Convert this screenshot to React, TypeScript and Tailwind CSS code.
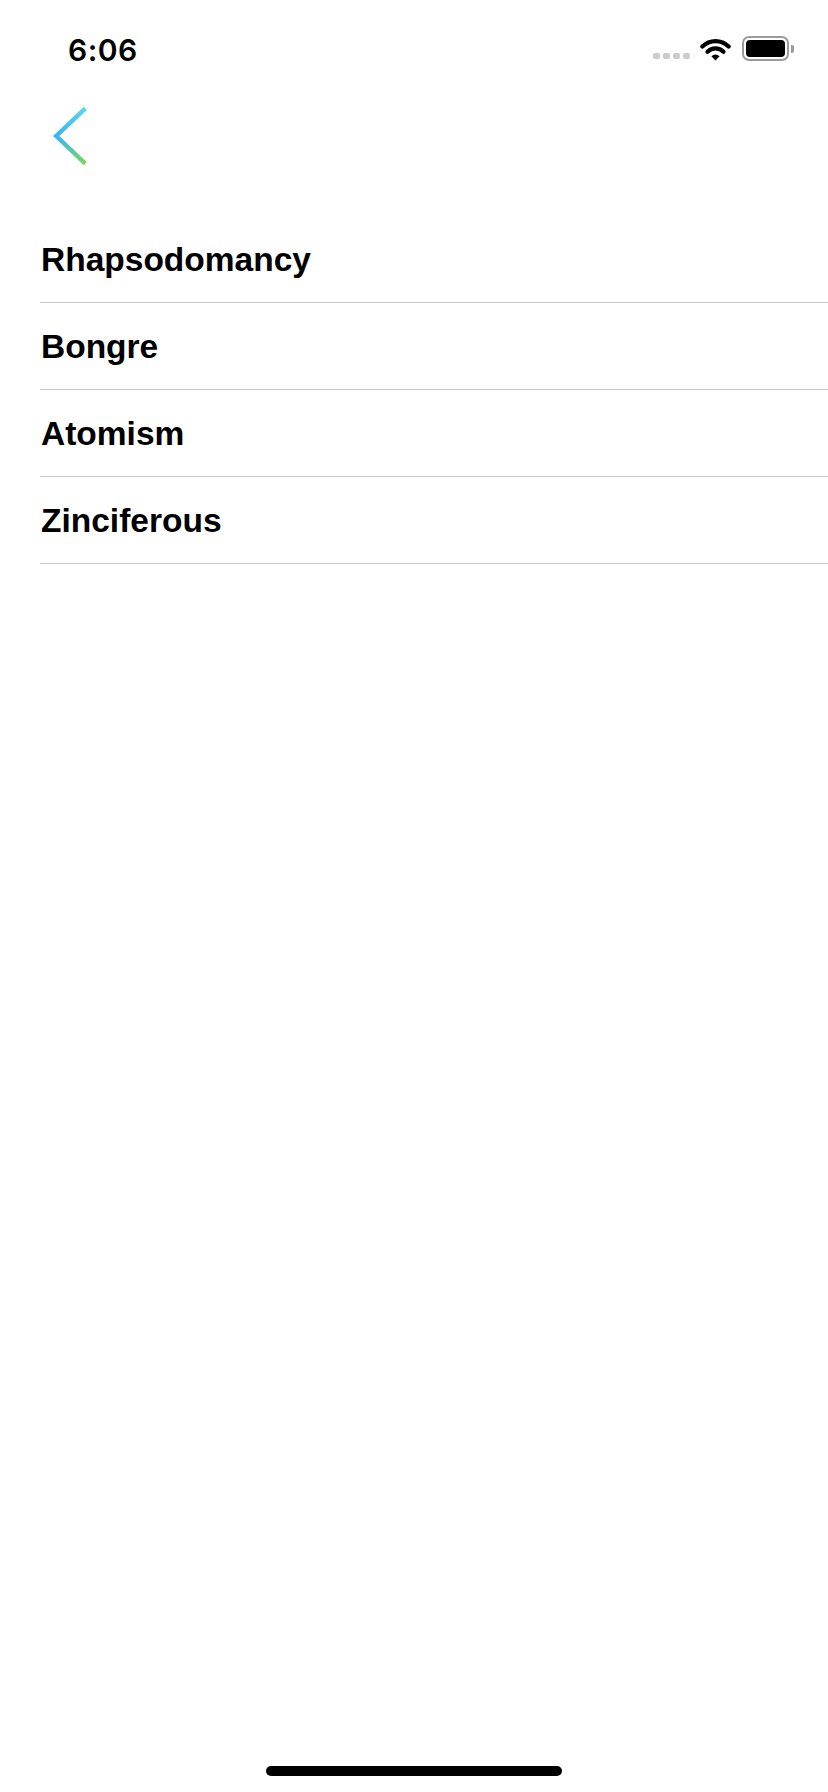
const words = ["Rhapsodomancy", "Bongre", "Atomism", "Zinciferous"];

function Wifi() {
  return (
    <svg width="31" height="24" viewBox="0 0 31 24" xmlns="http://www.w3.org/2000/svg">
      <path
        d="M2.4 9.6 A18.5 18.5 0 0 1 28.6 9.6"
        fill="none"
        stroke="black"
        strokeWidth="4.2"
        strokeLinecap="round"
      />
      <path
        d="M7.5 14.7 A11.3 11.3 0 0 1 23.5 14.7"
        fill="none"
        stroke="black"
        strokeWidth="4.2"
        strokeLinecap="round"
      />
      <path d="M15.5 23.5 L11.4 19.2 A5.9 5.9 0 0 1 19.6 19.2 Z" fill="black" strokeLinejoin="round" />
    </svg>
  );
}

function Battery() {
  return (
    <div className="flex items-center">
      <div className="flex h-[25px] w-[47px] items-center rounded-[7px] border-2 border-[#9b9b9b] p-[2px]">
        <div className="h-full w-full rounded-[4px] bg-black" />
      </div>
      <div className="ml-[2px] h-[8px] w-[3px] rounded-r-[2px] bg-[#9b9b9b]" />
    </div>
  );
}

function BackChevron() {
  return (
    <svg width="44" height="72" viewBox="0 0 44 72" xmlns="http://www.w3.org/2000/svg">
      <defs>
        <linearGradient id="chev" x1="0" y1="6" x2="0" y2="66" gradientUnits="userSpaceOnUse">
          <stop offset="0" stopColor="#5cdaed" />
          <stop offset="0.5" stopColor="#3ab3fc" />
          <stop offset="1" stopColor="#7fdc48" />
        </linearGradient>
      </defs>
      <polyline
        points="37.3,8.4 8.2,36 37.3,63.6"
        fill="none"
        stroke="url(#chev)"
        strokeWidth="4.4"
        strokeLinecap="butt"
        strokeLinejoin="miter"
      />
    </svg>
  );
}

export default function App() {
  return (
    <div className="flex h-[1792px] w-[828px] flex-col bg-white">
      {/* status bar */}
      <div className="flex h-[88px] items-start justify-between pl-[68px] pr-[34px] pt-[35px]">
        <span className="font-['Inter',sans-serif] text-[30px] font-semibold leading-none tracking-[0.5px] text-black">
          6:06
        </span>
        <div className="-mt-[2px] flex items-center pt-[3px]">
          <div className="mt-[14px] flex gap-[3px]">
            <span className="h-[6px] w-[7px] rounded-[2px] bg-[#cbcbcb]" />
            <span className="h-[6px] w-[7px] rounded-[2px] bg-[#cbcbcb]" />
            <span className="h-[6px] w-[7px] rounded-[2px] bg-[#cbcbcb]" />
            <span className="h-[6px] w-[7px] rounded-[2px] bg-[#cbcbcb]" />
          </div>
          <div className="ml-[10px]">
            <Wifi />
          </div>
          <div className="ml-[11px]">
            <Battery />
          </div>
        </div>
      </div>

      {/* nav */}
      <div className="h-[128px] pl-[48px] pt-[12px]">
        <BackChevron />
      </div>

      {/* list */}
      <ul className="ml-[40px]">
        {words.map((w) => (
          <li
            key={w}
            className="h-[87px] border-b border-[#c8c7cc] pl-[1px] pt-[1px] font-['Liberation_Sans',Arial,sans-serif] text-[33.5px] font-bold leading-[85px] text-black"
          >
            {w}
          </li>
        ))}
      </ul>

      <div className="flex-1" />

      {/* home indicator */}
      <div className="mb-[16px] flex justify-center">
        <div className="h-[10px] w-[296px] rounded-full bg-black" />
      </div>
    </div>
  );
}
